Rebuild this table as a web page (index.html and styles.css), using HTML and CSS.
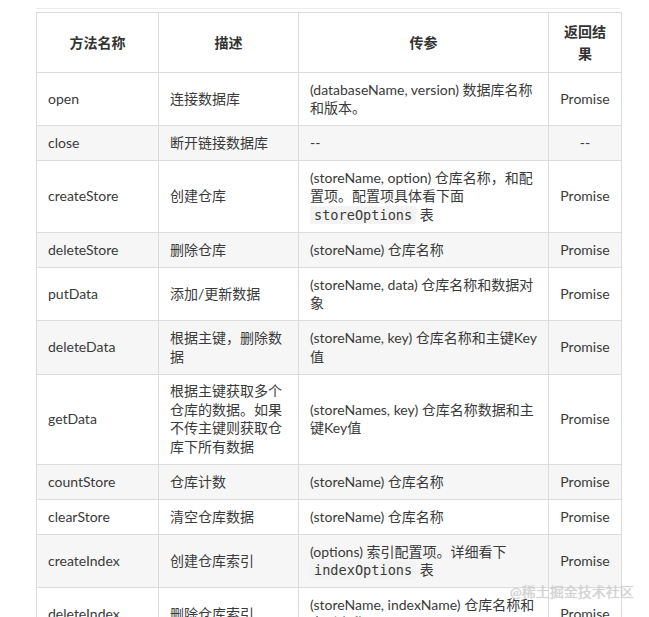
FILE: index.html
```html
<!DOCTYPE html>
<html lang="zh-CN">
<head>
<meta charset="utf-8">
<title>方法表</title>
<link rel="stylesheet" href="styles.css">
</head>
<body>
<div class="page">
  <div class="topline"></div>
  <table class="api">
    <colgroup>
      <col class="c1"><col class="c2"><col class="c3"><col class="c4">
    </colgroup>
    <thead>
      <tr><th>方法名称</th><th>描述</th><th>传参</th><th>返回结果</th></tr>
    </thead>
    <tbody>
      <tr><td>open</td><td>连接数据库</td><td>(databaseName, version) 数据库名称和版本。</td><td class="ret">Promise</td></tr>
      <tr><td>close</td><td>断开链接数据库</td><td>--</td><td class="ret">--</td></tr>
      <tr><td>createStore</td><td>创建仓库</td><td>(storeName, option) 仓库名称，和配置项。配置项具体看下面 <code>storeOptions</code> 表</td><td class="ret">Promise</td></tr>
      <tr><td>deleteStore</td><td>删除仓库</td><td>(storeName) 仓库名称</td><td class="ret">Promise</td></tr>
      <tr><td>putData</td><td>添加/更新数据</td><td>(storeName, data) 仓库名称和数据对象</td><td class="ret">Promise</td></tr>
      <tr><td>deleteData</td><td>根据主键，删除数据</td><td>(storeName, key) 仓库名称和主键Key值</td><td class="ret">Promise</td></tr>
      <tr><td>getData</td><td>根据主键获取多个仓库的数据。如果不传主键则获取仓库下所有数据</td><td>(storeNames, key) 仓库名称数据和主键Key值</td><td class="ret">Promise</td></tr>
      <tr><td>countStore</td><td>仓库计数</td><td>(storeName) 仓库名称</td><td class="ret">Promise</td></tr>
      <tr><td>clearStore</td><td>清空仓库数据</td><td>(storeName) 仓库名称</td><td class="ret">Promise</td></tr>
      <tr><td>createIndex</td><td>创建仓库索引</td><td>(options) 索引配置项。详细看下 <code>indexOptions</code> 表</td><td class="ret">Promise</td></tr>
      <tr><td>deleteIndex</td><td>删除仓库索引</td><td>(storeName, indexName) 仓库名称和索引名称</td><td class="ret">Promise</td></tr>
    </tbody>
  </table>
  <div class="watermark">@稀土掘金技术社区</div>
</div>
</body>
</html>
```
FILE: styles.css
```css
html, body {
  margin: 0;
  padding: 0;
  background: #fff;
  height: 617px;
  overflow: hidden;
}

.page {
  position: relative;
  padding: 8px 0 0 36px;
  height: 609px;
  font-family: "Lato", "Noto Sans CJK SC", sans-serif;
  font-size: 14px;
  color: #3a3a3a;
}

.topline {
  width: 584px;
  border-top: 1px solid #ececec;
  margin-bottom: 3px;
}

.api {
  border-collapse: collapse;
  table-layout: fixed;
  width: 585px;
}

.c1 { width: 122px; }
.c2 { width: 140px; }
.c3 { width: 250px; }
.c4 { width: 73px; }

.api th,
.api td {
  border: 1px solid #dcdcdc;
  vertical-align: middle;
}

.api th {
  padding: 8px 11px;
  font-weight: bold;
  text-align: center;
  line-height: 21.5px;
  background: #fff;
  color: #333;
}

.api td {
  padding: 7.7px 11px;
  line-height: 18.5px;
  text-align: left;
}

.api td.ret {
  text-align: center;
}

.api tbody tr:nth-child(even) td {
  background: #f6f6f6;
}

.api code {
  font-family: "DejaVu Sans Mono", monospace;
  font-size: 13.6px;
  background: #f3f3f3;
  padding: 1px 4px;
  border-radius: 2px;
}

.watermark {
  position: absolute;
  left: 510px;
  top: 582px;
  font-size: 14px;
  line-height: 20px;
  color: #d4d4d4;
  text-shadow: 0 0 1px rgba(120, 120, 120, 0.35);
  white-space: nowrap;
}
```
